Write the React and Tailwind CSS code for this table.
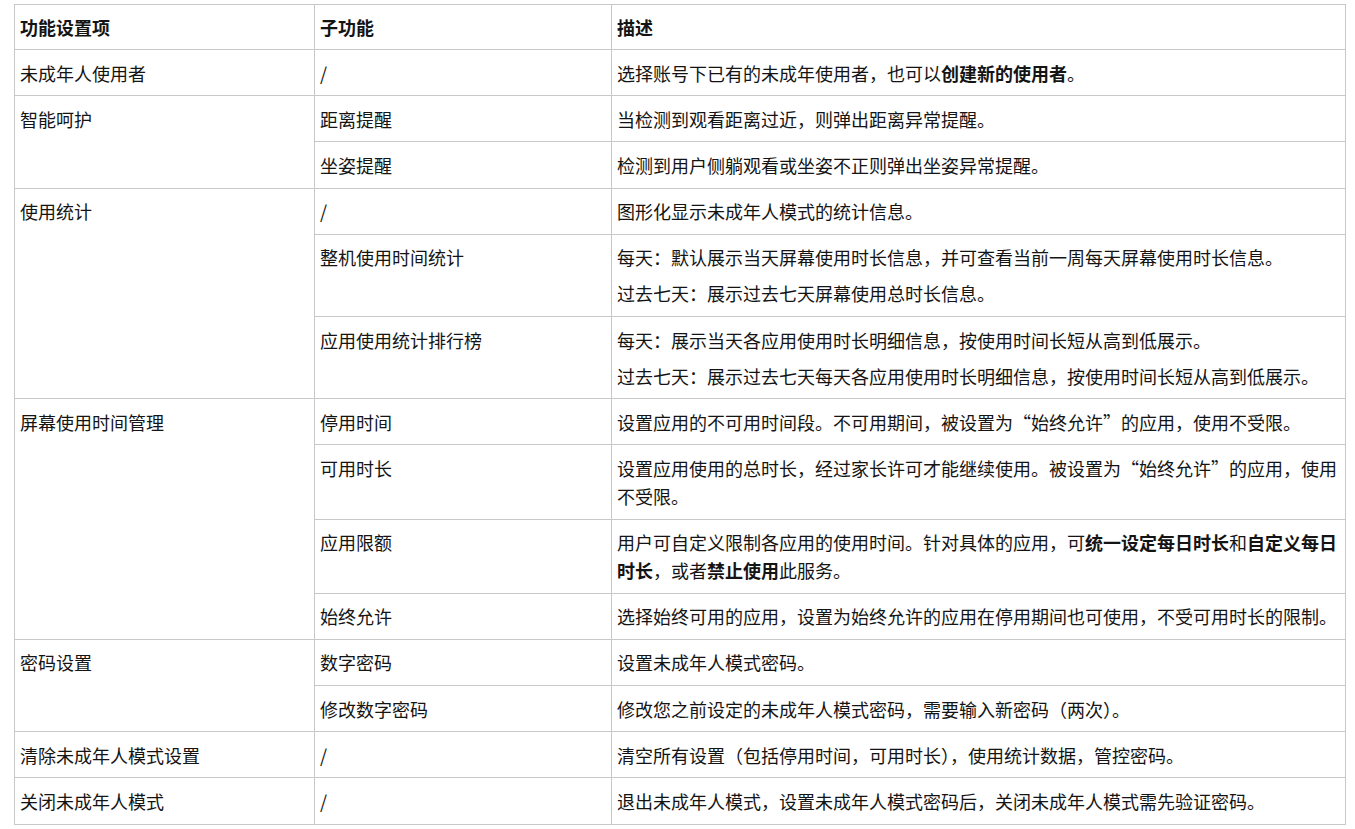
const rows = [
  { group: "未成年人使用者", span: 1, sub: "/", desc: [<>选择账号下已有的未成年使用者，也可以<b>创建新的使用者</b>。</>] },
  { group: "智能呵护", span: 2, sub: "距离提醒", desc: ["当检测到观看距离过近，则弹出距离异常提醒。"] },
  { sub: "坐姿提醒", desc: ["检测到用户侧躺观看或坐姿不正则弹出坐姿异常提醒。"] },
  { group: "使用统计", span: 3, sub: "/", desc: ["图形化显示未成年人模式的统计信息。"] },
  {
    sub: "整机使用时间统计",
    desc: ["每天：默认展示当天屏幕使用时长信息，并可查看当前一周每天屏幕使用时长信息。", "过去七天：展示过去七天屏幕使用总时长信息。"],
  },
  {
    sub: "应用使用统计排行榜",
    desc: ["每天：展示当天各应用使用时长明细信息，按使用时间长短从高到低展示。", "过去七天：展示过去七天每天各应用使用时长明细信息，按使用时间长短从高到低展示。"],
  },
  { group: "屏幕使用时间管理", span: 4, sub: "停用时间", desc: ["设置应用的不可用时间段。不可用期间，被设置为“始终允许”的应用，使用不受限。"] },
  { sub: "可用时长", desc: ["设置应用使用的总时长，经过家长许可才能继续使用。被设置为“始终允许”的应用，使用不受限。"] },
  {
    sub: "应用限额",
    desc: [<>用户可自定义限制各应用的使用时间。针对具体的应用，可<b>统一设定每日时长</b>和<b>自定义每日时长</b>，或者<b>禁止使用</b>此服务。</>],
  },
  { sub: "始终允许", desc: ["选择始终可用的应用，设置为始终允许的应用在停用期间也可使用，不受可用时长的限制。"] },
  { group: "密码设置", span: 2, sub: "数字密码", desc: ["设置未成年人模式密码。"] },
  { sub: "修改数字密码", desc: ["修改您之前设定的未成年人模式密码，需要输入新密码（两次）。"] },
  { group: "清除未成年人模式设置", span: 1, sub: "/", desc: ["清空所有设置（包括停用时间，可用时长），使用统计数据，管控密码。"] },
  { group: "关闭未成年人模式", span: 1, sub: "/", desc: ["退出未成年人模式，设置未成年人模式密码后，关闭未成年人模式需先验证密码。"] },
];

const cell = "border border-[#c8c8c8] align-top px-[5px]";

export default function App() {
  return (
    <div
      className="min-h-[829px] bg-white pt-[4px] pl-[14px] text-[#141414]"
      style={{ fontFamily: '"Noto Sans CJK SC", "Noto Sans", sans-serif' }}
    >
      <table className="w-[1332px] table-fixed border-collapse text-[18px] leading-[28px]">
        <colgroup>
          <col className="w-[300px]" />
          <col className="w-[297px]" />
          <col />
        </colgroup>
        <thead>
          <tr>
            <th className={`${cell} py-[8px] text-left font-bold`}>功能设置项</th>
            <th className={`${cell} py-[8px] text-left font-bold`}>子功能</th>
            <th className={`${cell} py-[8px] text-left font-bold`}>描述</th>
          </tr>
        </thead>
        <tbody>
          {rows.map((row, i) => (
            <tr key={i}>
              {row.group ? (
                <td rowSpan={row.span} className={`${cell} py-[8.6px]`}>
                  {row.group}
                </td>
              ) : null}
              <td className={`${cell} py-[8.6px]`}>{row.sub}</td>
              <td className={`${cell} py-[8.6px]`}>
                {row.desc.map((text, j) => (
                  <p key={j} className={j > 0 ? "mt-[8px]" : ""}>
                    {text}
                  </p>
                ))}
              </td>
            </tr>
          ))}
        </tbody>
      </table>
    </div>
  );
}
